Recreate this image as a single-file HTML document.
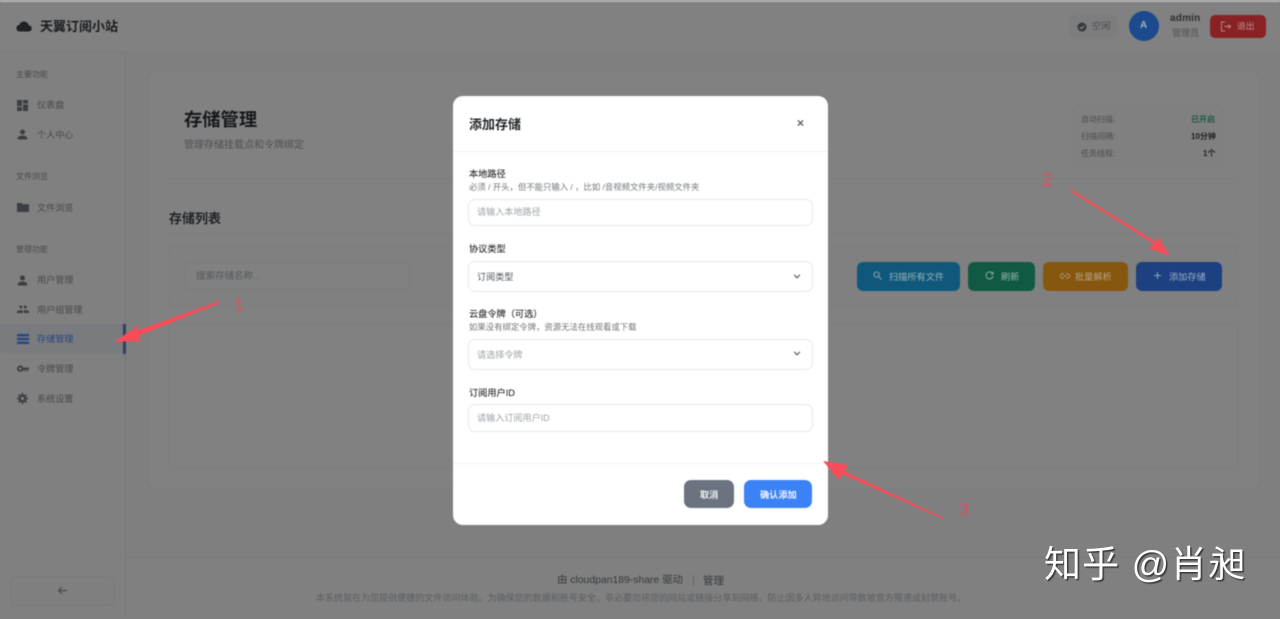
<!DOCTYPE html>
<html lang="zh">
<head>
<meta charset="utf-8">
<title>添加存储</title>
<style>
*{box-sizing:border-box;margin:0;padding:0}
html,body{width:1280px;height:619px;overflow:hidden;background:#808080}
body{font-family:"Liberation Sans","Noto Sans CJK SC",sans-serif;position:relative}
.a{position:absolute;white-space:nowrap;line-height:1}
.bg{position:absolute;left:0;top:0;width:1280px;height:619px;filter:blur(.5px)}
.box{position:absolute}
.nav{font-size:9.1px;color:#45484c}
.sec{font-size:8px;color:#484a4d}
.lab{font-size:9.2px;color:#26282c;-webkit-text-stroke:.1px #26282c}
.sub{font-size:8.4px;color:#72767c}
.inp{position:absolute;left:15px;width:345px;background:#fff;border:1px solid #e7e9ec;border-radius:7px}
.ph{font-size:9.1px;color:#9da2aa}
.btn{position:absolute;top:262px;height:29px;border-radius:6px}
.btxt{font-size:9.2px}
</style>
</head>
<body>
<div class="bg">
  <div class="box" style="left:0;top:0;width:1280px;height:2px;background:#b4b4b4"></div>
  <div class="box" style="left:0;top:2px;width:1280px;height:50px;background:#818181;border-bottom:1px solid #7b7b7b"></div>
  <div class="box" style="left:0;top:52px;width:126px;height:567px;background:#808080;border-right:1px solid #7a7a7b"></div>
  <div class="box" style="left:127px;top:53px;width:1153px;height:566px;background:#7f7f80"></div>
  <div class="box" style="left:147px;top:71px;width:1114px;height:418px;background:#818181;border:1px solid #7c7c7c;border-radius:9px"></div>
  <div class="box" style="left:127px;top:557px;width:1153px;height:62px;background:#808080;border-top:1px solid #7a7a7b"></div>

  <svg class="box" style="left:16px;top:20px" width="16" height="13" viewBox="0 0 16 13"><path d="M4 11.5C1.8 11.5.4 10 .4 8.2.4 6.600 1.600 5.200 3.200 5 3.900 2.900 5.800 1.500 8 1.500c2.300 0 4.200 1.600 4.700 3.700 1.700.2 3 1.500 3 3.200 0 1.700-1.300 3.100-3.200 3.100z" fill="#1f2124"/></svg>
  <div class="a" style="left:40px;top:20px;font-size:13px;font-weight:700;color:#1b1d20">天翼订阅小站</div>

  <div class="box" style="left:1069px;top:15px;width:49px;height:23px;background:#7d7d7e;border-radius:6px"></div>
  <svg class="box" style="left:1077px;top:22px" width="10" height="10" viewBox="0 0 10 10"><circle cx="5" cy="5" r="4.500" fill="#35383c"/><path d="M2.800 5l1.600 1.600 2.800-3" stroke="#8a8c8e" stroke-width="1.100" fill="none"/></svg>
  <div class="a" style="left:1092px;top:22px;font-size:9.300px;color:#4a4d52">空闲</div>
  <div class="box" style="left:1129px;top:11px;width:30px;height:30px;border-radius:50%;background:#1c4a8e"></div>
  <div class="a" style="left:1140px;top:21px;font-size:10px;font-weight:700;color:#a0b0c8">A</div>
  <div class="a" style="left:1170px;top:14px;font-size:10px;font-weight:700;letter-spacing:.2px;color:#2c2e32">admin</div>
  <div class="a" style="left:1172px;top:29px;font-size:9px;color:#4e5155">管理员</div>
  <div class="box" style="left:1210px;top:15px;width:56px;height:23px;border-radius:5px;background:#882224"></div>
  <svg class="box" style="left:1220px;top:21px" width="12" height="11" viewBox="0 0 12 11" fill="none" stroke="#b98889" stroke-width="1"><path d="M5 1H1.500v9H5M4.500 5.500h6M8.500 3.500l2 2-2 2"/></svg>
  <div class="a" style="left:1237px;top:22px;font-size:8.800px;color:#bf9394">退出</div>

  <div class="a sec" style="left:16px;top:71px">主要功能</div>
  <svg class="box" style="left:17px;top:100px" width="11" height="11" viewBox="0 0 11 11" fill="#3b3e42"><rect x="0" y="0" width="5" height="6"/><rect x="6" y="0" width="5" height="3.500"/><rect x="0" y="7" width="5" height="4"/><rect x="6" y="4.500" width="5" height="6.500"/></svg>
  <div class="a nav" style="left:37px;top:101px">仪表盘</div>
  <svg class="box" style="left:17px;top:129px" width="11" height="11" viewBox="0 0 11 11" fill="#3b3e42"><circle cx="5.500" cy="3" r="2.500"/><path d="M.8 10.500V9c0-1.700 3-2.500 4.700-2.500s4.700.8 4.700 2.500v1.500z"/></svg>
  <div class="a nav" style="left:37px;top:131px">个人中心</div>
  <div class="a sec" style="left:16px;top:173px">文件浏览</div>
  <svg class="box" style="left:17px;top:202px" width="12" height="10" viewBox="0 0 12 10" fill="#3b3e42"><path d="M0 1h4.500l1.200 1.200H12V10H0z"/></svg>
  <div class="a nav" style="left:37px;top:204px">文件浏览</div>
  <div class="a sec" style="left:16px;top:246px">管理功能</div>
  <svg class="box" style="left:17px;top:275px" width="11" height="11" viewBox="0 0 11 11" fill="#3b3e42"><circle cx="5.500" cy="3" r="2.500"/><path d="M.8 10.500V9c0-1.700 3-2.500 4.700-2.500s4.700.8 4.700 2.500v1.500z"/></svg>
  <div class="a nav" style="left:37px;top:276px">用户管理</div>
  <svg class="box" style="left:17px;top:305px" width="12" height="9" viewBox="0 0 12 9" fill="#3b3e42"><circle cx="3.800" cy="2" r="1.500"/><circle cx="8.300" cy="2" r="1.500"/><path d="M0 8V6.800C0 5.700 2.200 5.200 3.800 5.200s2.200.5 2.200 1.600V8zM7 8V6.800c0-.7-.2-1.200-.7-1.500.6-.1 1.300-.2 2-.2 1.600 0 3.700.6 3.700 1.700V8z"/></svg>
  <div class="a nav" style="left:37px;top:306px">用户组管理</div>
  <div class="box" style="left:0;top:324px;width:124px;height:29px;background:#797b7f"></div>
  <div class="box" style="left:123px;top:324px;width:3px;height:30px;background:#2f4263"></div>
  <svg class="box" style="left:17px;top:334px" width="12" height="10" viewBox="0 0 12 10" fill="#234783"><rect width="12" height="2.400"/><rect y="3.800" width="12" height="2.400"/><rect y="7.600" width="12" height="2.400"/></svg>
  <div class="a nav" style="left:37px;top:335px;color:#28477c">存储管理</div>
  <svg class="box" style="left:17px;top:365px" width="12" height="8" viewBox="0 0 12 8"><circle cx="3.200" cy="3.600" r="2.300" fill="none" stroke="#3b3e42" stroke-width="1.800"/><path d="M5.500 2.600H12v1.900h-1.200V6.300H9.300V4.500H8V6.300H6.600V4.500H5.500z" fill="#3b3e42"/></svg>
  <div class="a nav" style="left:37px;top:365px">令牌管理</div>
  <svg class="box" style="left:17px;top:393px" width="11" height="11" viewBox="0 0 11 11"><circle cx="5.500" cy="5.500" r="2.700" fill="none" stroke="#3b3e42" stroke-width="2.200"/><g stroke="#3b3e42" stroke-width="1.800"><path d="M5.500 0v2M5.500 9v2M0 5.500h2M9 5.500h2M1.600 1.600L3 3M8 8l1.400 1.400M1.600 9.400L3 8M8 3l1.400-1.400"/></g></svg>
  <div class="a nav" style="left:37px;top:395px">系统设置</div>
  <div class="box" style="left:10px;top:576px;width:105px;height:30px;background:#7f7f80;border:1px solid #7a7a7b;border-radius:6px"></div>
  <svg class="box" style="left:57px;top:585px" width="11" height="11" viewBox="0 0 11 11" fill="none" stroke="#46494d" stroke-width="1.200"><path d="M10 5.500H1.500M5 2L1.500 5.500 5 9"/></svg>

  <div class="box" style="left:167px;top:96px;width:1070px;height:83px;border-bottom:1px solid #7c7c7c"></div>
  <div class="a" style="left:184px;top:111px;font-size:18.300px;font-weight:700;color:#17191c">存储管理</div>
  <div class="a" style="left:184px;top:141px;font-size:10px;color:#4e5156">管理存储挂载点和令牌绑定</div>
  <div class="box" style="left:1073px;top:105px;width:150px;height:61px;background:#808080;border:1px solid #7c7c7c;border-radius:6px"></div>
  <div class="a" style="left:1081px;top:116px;font-size:8px;color:#494c50">自动扫描:</div>
  <div class="a" style="left:1191px;top:116px;font-size:8px;font-weight:700;color:#1c5a43">已开启</div>
  <div class="a" style="left:1081px;top:133px;font-size:8px;color:#494c50">扫描间隔:</div>
  <div class="a" style="left:1191px;top:133px;font-size:8px;font-weight:700;color:#1d1f22">10分钟</div>
  <div class="a" style="left:1081px;top:150px;font-size:8px;color:#494c50">任务线程:</div>
  <div class="a" style="left:1203px;top:150px;font-size:8px;font-weight:700;color:#1d1f22">1个</div>

  <div class="a" style="left:169px;top:212px;font-size:13px;font-weight:700;color:#212327">存储列表</div>
  <div class="box" style="left:167px;top:233px;width:1070px;height:1px;background:#7c7c7c"></div>
  <div class="box" style="left:168px;top:246px;width:1070px;height:61px;background:#808080;border:1px solid #7c7c7c;border-radius:6px"></div>
  <div class="box" style="left:185px;top:262px;width:225px;height:28px;background:#818181;border:1px solid #797a7a;border-radius:6px"></div>
  <div class="a" style="left:196px;top:272px;font-size:9.500px;color:#55585c">搜索存储名称...</div>

  <div class="btn" style="left:857px;width:103px;background:#10587b"></div>
  <svg class="box" style="left:873px;top:271px" width="9" height="9" viewBox="0 0 9 9" fill="none" stroke="#86a3b2" stroke-width="1"><circle cx="3.600" cy="3.600" r="2.600"/><path d="M5.600 5.600L8.500 8.500"/></svg>
  <div class="a btxt" style="left:889px;top:273px;color:#9ab1bd">扫描所有文件</div>
  <div class="btn" style="left:968px;width:67px;background:#105a44"></div>
  <svg class="box" style="left:985px;top:271px" width="9" height="9" viewBox="0 0 9 9" fill="none" stroke="#86aa9e" stroke-width="1"><path d="M7.500 2.500A3.500 3.500 0 1 0 8 5M8 .8v2.200H5.800"/></svg>
  <div class="a btxt" style="left:1001px;top:273px;color:#98b4aa">刷新</div>
  <div class="btn" style="left:1043px;width:85px;background:#85570f"></div>
  <svg class="box" style="left:1060px;top:273px" width="10" height="6" viewBox="0 0 10 6" fill="none" stroke="#b09672" stroke-width="1"><path d="M4 .8H2.500a2.200 2.200 0 0 0 0 4.400H4M6 .8h1.500a2.200 2.200 0 0 1 0 4.400H6M3 3h4"/></svg>
  <div class="a btxt" style="left:1075px;top:273px;color:#b7a484">批量解析</div>
  <div class="btn" style="left:1136px;width:86px;background:#1c4080"></div>
  <svg class="box" style="left:1153px;top:271px" width="9" height="9" viewBox="0 0 9 9" stroke="#8fa0c1" stroke-width="1"><path d="M4.500 1v7M1 4.500h7"/></svg>
  <div class="a btxt" style="left:1169px;top:273px;color:#9dabc9">添加存储</div>

  <div class="box" style="left:168px;top:323px;width:1070px;height:145px;background:#818181;border:1px solid #7c7c7c;border-radius:6px"></div>

  <div class="a" style="left:557px;top:576px;font-size:10.4px;color:#35383c">由 cloudpan189-share 驱动</div>
  <div class="box" style="left:693px;top:575px;width:1px;height:11px;background:#64676b"></div>
  <div class="a" style="left:703px;top:576px;font-size:10.500px;color:#35383c">管理</div>
  <div class="a" style="left:316px;top:594px;font-size:9px;letter-spacing:.03px;color:#5a5d61">本系统旨在为您提供便捷的文件访问体验。为确保您的数据和账号安全，非必要勿将您的网站或链接分享到网络，防止因多人异地访问导致被官方限速或封禁账号。</div>

  <div class="box" style="left:453px;top:96px;width:375px;height:429px;background:#fff;border-radius:10px">
    <div class="a" style="left:16px;top:22px;font-size:13px;font-weight:700;color:#23262a">添加存储</div>
    <svg class="box" style="left:344px;top:23px" width="7" height="8" viewBox="0 0 8 8" stroke="#5a5e64" stroke-width="1.500"><path d="M1 1l6 6M7 1L1 7"/></svg>
    <div class="box" style="left:0;top:55px;width:375px;height:1px;background:#eef0f2"></div>

    <div class="a lab" style="left:16px;top:74px">本地路径</div>
    <div class="a sub" style="left:16px;top:87px">必须 / 开头，但不能只输入 / ，比如 /音视频文件夹/视频文件夹</div>
    <div class="inp" style="top:103px;height:27px"></div>
    <div class="a ph" style="left:24px;top:112px">请输入本地路径</div>

    <div class="a lab" style="left:16px;top:149px">协议类型</div>
    <div class="inp" style="top:165px;height:31px"></div>
    <div class="a ph" style="left:24px;top:177px;color:#4e5359">订阅类型</div>
    <svg class="box" style="left:340px;top:178px" width="8" height="5" viewBox="0 0 9 6" fill="none" stroke="#5a5e64" stroke-width="1.400"><path d="M1 1l3.500 3.500L8 1"/></svg>

    <div class="a lab" style="left:16px;top:214px">云盘令牌（可选）</div>
    <div class="a sub" style="left:16px;top:227px">如果没有绑定令牌，资源无法在线观看或下载</div>
    <div class="inp" style="top:243px;height:31px"></div>
    <div class="a ph" style="left:24px;top:255px">请选择令牌</div>
    <svg class="box" style="left:340px;top:255px" width="8" height="5" viewBox="0 0 9 6" fill="none" stroke="#5a5e64" stroke-width="1.400"><path d="M1 1l3.500 3.500L8 1"/></svg>

    <div class="a lab" style="left:16px;top:293px">订阅用户ID</div>
    <div class="inp" style="top:308px;height:28px"></div>
    <div class="a ph" style="left:24px;top:318px">请输入订阅用户ID</div>

    <div class="box" style="left:0;top:367px;width:375px;height:1px;background:#f1f2f4"></div>
    <div class="box" style="left:231px;top:384px;width:50px;height:28px;background:#6b7280;border-radius:7px"></div>
    <div class="a" style="left:247px;top:395px;font-size:9.200px;font-weight:700;color:#f0f1f3">取消</div>
    <div class="box" style="left:291px;top:384px;width:68px;height:28px;background:#3b82f6;border-radius:7px"></div>
    <div class="a" style="left:307px;top:395px;font-size:9.200px;font-weight:700;color:#f0f5ff">确认添加</div>
  </div>
</div>

<svg class="box" style="left:0;top:0;filter:blur(.6px)" width="1280" height="619" viewBox="0 0 1280 619">
  <path d="M219 301L136 331 139 325 114 342 142 341 138 336 220 303z" fill="#fa4c58"/>
  <path d="M1070 191L1154 244 1148 248 1170 256 1158 237 1156 242 1072 190z" fill="#fa4c58"/>
  <path d="M944 518L844 471 848 465 823 461 839 480 842 474 943 519z" fill="#fa4c58"/>
</svg>
<div class="a" style="left:234px;top:296px;font-size:18px;color:#d9525c;filter:blur(.5px)">1</div>
<div class="a" style="left:1042px;top:171px;font-size:19px;color:#d9525c;filter:blur(.5px)">2</div>
<div class="a" style="left:959px;top:501px;font-size:18px;color:#d9525c;filter:blur(.5px)">3</div>

<div class="a" style="left:1044px;top:546px;font-size:37px;color:#fff;text-shadow:1.500px 1.500px 1px #3b3b3b;letter-spacing:1.1px">知乎 @肖昶</div>
</body>
</html>
